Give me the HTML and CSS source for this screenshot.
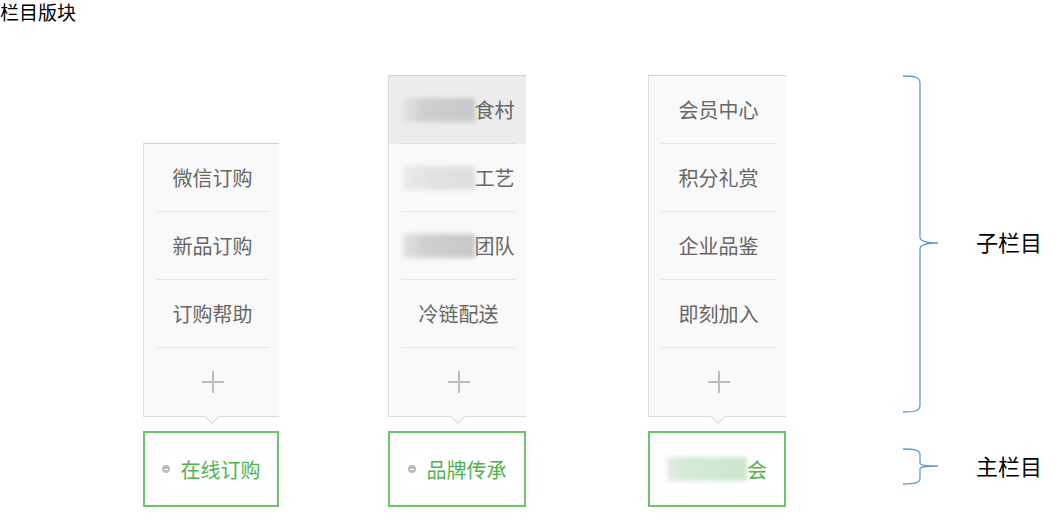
FILE: index.html
```html
<!DOCTYPE html>
<html lang="zh-CN">
<head>
    <meta charset="UTF-8">
    <title>栏目版块</title>
    <link rel="stylesheet" href="styles.css">
</head>
<body>
    <div class="title">栏目版块</div>
    <div class="board">
        <div class="col col-1">
            <div class="sub">
                <div class="sub-item"><span>微信订购</span></div>
                <div class="sub-item"><span>新品订购</span></div>
                <div class="sub-item"><span>订购帮助</span></div>
                <div class="sub-item add"><span><svg width="24" height="24" viewBox="0 0 24 24"><path d="M12 1v22M1 12h22" stroke="#bdbdbd" stroke-width="2"/></svg></span></div>
            </div>
            <div class="main"><i class="dot"></i>在线订购</div>
        </div>

        <div class="col col-2">
            <div class="sub">
                <div class="sub-item active"><span><b class="blur dark"></b>食村</span></div>
                <div class="sub-item"><span><b class="blur light"></b>工艺</span></div>
                <div class="sub-item"><span><b class="blur dark"></b>团队</span></div>
                <div class="sub-item"><span>冷链配送</span></div>
                <div class="sub-item add"><span><svg width="24" height="24" viewBox="0 0 24 24"><path d="M12 1v22M1 12h22" stroke="#bdbdbd" stroke-width="2"/></svg></span></div>
            </div>
            <div class="main"><i class="dot"></i>品牌传承</div>
        </div>

        <div class="col col-3">
            <div class="sub">
                <div class="sub-item"><span>会员中心</span></div>
                <div class="sub-item"><span>积分礼赏</span></div>
                <div class="sub-item"><span>企业品鉴</span></div>
                <div class="sub-item"><span>即刻加入</span></div>
                <div class="sub-item add"><span><svg width="24" height="24" viewBox="0 0 24 24"><path d="M12 1v22M1 12h22" stroke="#bdbdbd" stroke-width="2"/></svg></span></div>
            </div>
            <div class="main"><b class="blur green"></b>会</div>
        </div>

        <div class="legend">
            <div class="legend-row tall">
                <svg width="40" height="339" viewBox="0 0 40 339">
                    <path d="M2 1 C14 1 19 2 19 8 L19 162 C19 166 24 168 37 168 C24 168 19 170 19 174 L19 330 C19 336 14 337 2 337" fill="none" stroke="#5b9bd5" stroke-width="1.3"/>
                </svg>
                <span class="label">子栏目</span>
            </div>
            <div class="legend-row short">
                <svg width="40" height="38" viewBox="0 0 40 38">
                    <path d="M2 1 C14 1 19 2 19 7 L19 15 C19 17 24 18 37 18 C24 18 19 19 19 21 L19 30 C19 35 14 36 2 36" fill="none" stroke="#5b9bd5" stroke-width="1.3"/>
                </svg>
                <span class="label">主栏目</span>
            </div>
        </div>
    </div>
</body>
</html>
```

FILE: styles.css
```css
body {
    margin: 0;
    background: #fff;
    font-family: "Noto Sans CJK SC", "Liberation Sans", sans-serif;
}
.title {
    font-size: 19px;
    line-height: 24px;
    color: #000;
}
.board {
    display: flex;
    align-items: flex-end;
    margin-top: 51px;
}
.col {
    display: flex;
    flex-direction: column;
    width: 138px;
}
.col-1 {
    width: 136px;
    margin-left: 143px;
}
.col-2 {
    margin-left: 109px;
}
.col-3 {
    margin-left: 122px;
}
.sub {
    position: relative;
    background: #f9f9f9;
    border: 1px solid #dcdcdc;
    border-top-color: #d0d0d0;
    border-right: none;
}
.sub::after {
    content: "";
    position: absolute;
    left: 50%;
    bottom: -6px;
    width: 9px;
    height: 9px;
    margin-left: -5px;
    background: #f9f9f9;
    border-right: 1px solid #dcdcdc;
    border-bottom: 1px solid #dcdcdc;
    transform: rotate(45deg);
}
.sub-item {
    height: 68px;
    padding: 0 10px 0 12px;
}
.sub-item.active {
    background: #ececec;
}
.sub-item span {
    display: flex;
    align-items: center;
    justify-content: center;
    height: 67px;
    border-bottom: 1px solid #e6e6e6;
    font-size: 20px;
    color: #666;
}
.sub-item.active span {
    border-bottom-color: #dedede;
}
.sub-item.add span {
    border-bottom: none;
}
.blur {
    display: inline-block;
    width: 72px;
    height: 24px;
    filter: blur(2px);
}
.blur.dark {
    background: linear-gradient(90deg, #e4e4e4 0%, #cfcfcf 30%, #c8c8c8 100%);
}
.blur.light {
    background: linear-gradient(90deg, #ebebeb 0%, #e2e2e2 40%, #dedede 100%);
}
.blur.green {
    width: 80px;
    background: linear-gradient(90deg, #eaeaea 0%, #d4ead4 20%, #cce6cc 100%);
}
.main {
    display: flex;
    align-items: center;
    justify-content: center;
    height: 72px;
    margin-top: 14px;
    border: 2px solid #6cc46c;
    background: #fff;
    font-size: 20px;
    color: #4db34d;
}
.dot {
    position: relative;
    width: 8px;
    height: 8px;
    margin-right: 11px;
    border-radius: 50%;
    background: #bbb;
}
.dot::after {
    content: "";
    position: absolute;
    left: 2px;
    top: 3.5px;
    width: 4px;
    height: 1px;
    background: #fff;
}
.legend {
    align-self: flex-start;
    display: flex;
    flex-direction: column;
    margin-left: 115px;
}
.legend-row {
    display: flex;
    align-items: center;
}
.short {
    margin-top: 34px;
}
.label {
    margin-left: 35px;
    margin-bottom: 8px;
    font-size: 22px;
    color: #000;
}
.short .label {
    margin-bottom: 4px;
}
```
